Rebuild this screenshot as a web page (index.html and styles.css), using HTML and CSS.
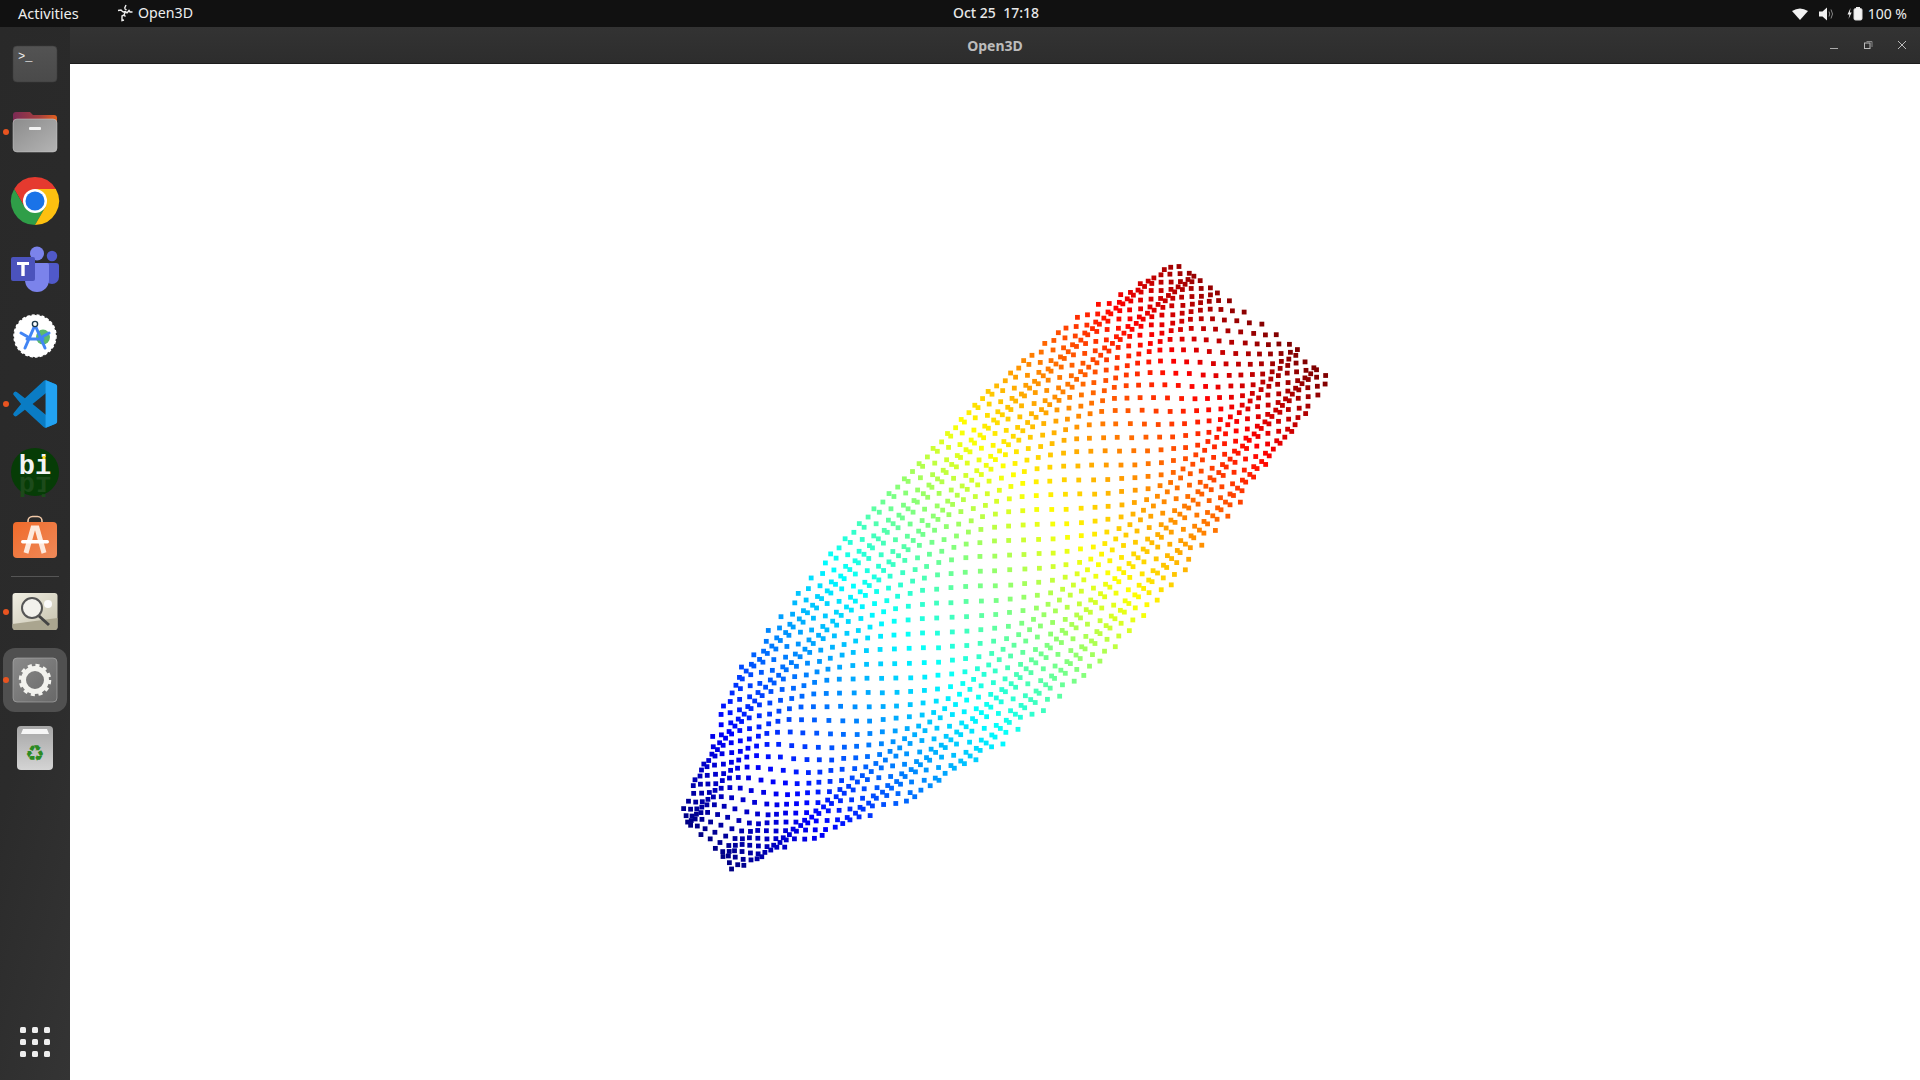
FILE: index.html
```html
<!DOCTYPE html>
<html lang="en">
<head>
<meta charset="utf-8">
<title>Open3D</title>
<link rel="stylesheet" href="styles.css">
</head>
<body>
<header class="topbar">
  <div class="top-left">
    <span class="activities">Activities</span>
    <span class="app-menu">
      <svg class="app-glyph" viewBox="0 0 16 18" width="16" height="18"><path d="M9 1 7.5 4.5 M7.5 4.5 9.5 6 M1 6.5 4 6 6 8 M6 8 8.5 7.5 10 9 M10 9 12 6.5 13 8 15.5 8 M8.5 7.5 7 11 8.5 12.5 M7 11 5 12 5 16.5 7 16" fill="none" stroke="#eee" stroke-width="1.4"/></svg>
      Open3D
    </span>
  </div>
  <time class="clock">Oct 25  17:18</time>
  <div class="top-right">
    <svg class="tray-wifi" viewBox="0 0 16 12" width="16" height="12"><path d="M0 3 Q8 -2 16 3 L8 12Z" fill="#f2f2f2"/></svg>
    <svg class="tray-vol" viewBox="0 0 16 14" width="16" height="14"><path d="M0 4.500H3.500L8 .5V13.500L3.500 9.500H0Z" fill="#f0f0f0"/><path d="M10 4.500Q11.500 7 10 9.500M12 2.500Q15 7 12 11.500" fill="none" stroke="#888" stroke-width="1"/></svg>
    <svg class="tray-bat" viewBox="0 0 16 14" width="16" height="14"><path d="M3.500 1 0.500 7.500H2.500L1.500 12 4.700 5.500H2.800Z" fill="#f0f0f0"/><rect x="7" y="1.500" width="8" height="11.500" rx="1.500" fill="#f4f4f4" stroke="#ddd"/><rect x="9" y="0" width="4" height="2" fill="#eee"/></svg>
    <span class="battery">100 %</span>
  </div>
</header>
<div class="desktop">
  <nav class="dock">
    <div class="dock-apps">
      <div class="dock-item">
        <svg class="ico" viewBox="0 0 48 48"><defs><linearGradient id="term" x1="0" y1="0" x2="0" y2="1"><stop offset="0" stop-color="#535353"/><stop offset="1" stop-color="#4a4a4a"/></linearGradient></defs><rect x="2" y="6" width="44" height="36" rx="4" fill="url(#term)" stroke="#3c3c3c" stroke-width=".6"/><text x="7" y="20" class="term-text">&gt;_</text></svg>
      </div>
      <div class="dock-item running">
        <svg class="ico" viewBox="0 0 48 48"><defs><linearGradient id="ftab" x1="0" y1="0" x2="1" y2="0"><stop offset="0" stop-color="#7b2a55"/><stop offset=".6" stop-color="#a5403e"/><stop offset="1" stop-color="#e2611f"/></linearGradient><linearGradient id="fbody" x1="0" y1="0" x2="1" y2="1"><stop offset="0" stop-color="#8c8c8c"/><stop offset="1" stop-color="#b4b4b4"/></linearGradient></defs><path d="M2 7a3 3 0 0 1 3-3H19l3 3H43a3 3 0 0 1 3 3V20H2Z" fill="url(#ftab)"/><rect x="2" y="11" width="44" height="33" rx="4" fill="url(#fbody)" stroke="#ccc" stroke-width=".5"/><rect x="18" y="19" width="12" height="3" rx="1" fill="#f2f2f2"/></svg>
      </div>
      <div class="dock-item">
        <svg class="ico" viewBox="0 -1 48 48"><path d="M44.800 12A24 24 0 0 0 3.200 12L13.600 30 24 24V12Z" fill="#e53a2f"/><path d="M3.200 12A24 24 0 0 0 24 48L34.400 30 24 24 13.600 30Z" fill="#2f9e48"/><path d="M24 48A24 24 0 0 0 44.800 12H24V24L34.400 30Z" fill="#fdc010"/><circle cx="24" cy="24" r="12" fill="#fff"/><circle cx="24" cy="24" r="9.500" fill="#1a73e8"/></svg>
      </div>
      <div class="dock-item">
        <svg class="ico" viewBox="0 -2 48 48"><circle cx="26" cy="7.500" r="7" fill="#7b83eb"/><circle cx="41" cy="10" r="5.200" fill="#5059c9"/><path d="M34 17H45a3 3 0 0 1 3 3V31a7 7 0 0 1-14 0Z" fill="#5059c9"/><path d="M14 17H36a2 2 0 0 1 2 2V34a12 12 0 0 1-24 0Z" fill="#7b83eb"/><rect x="0" y="11" width="24" height="24" rx="2" fill="#4b53bc"/><path d="M6 16H18V19H13.700V30H10.300V19H6Z" fill="#fff"/></svg>
      </div>
      <div class="dock-item">
        <svg class="ico" viewBox="0 0 48 48"><circle cx="24" cy="24" r="21" fill="#fff" stroke="#fff" stroke-width="1.500" stroke-dasharray="3 2"/><ellipse cx="32" cy="25" rx="7" ry="7.500" fill="#5cb96c"/><path d="M24 13 14 36M24 13 34 36M16 27H32" fill="none" stroke="#4285f4" stroke-width="3" stroke-linecap="round"/><path d="M10 21 17 25M38 21 31 25" stroke="#4285f4" stroke-width="3" stroke-linecap="round"/><circle cx="24" cy="12" r="2.600" fill="#fff" stroke="#1d3a4c" stroke-width="1.400"/></svg>
      </div>
      <div class="dock-item running">
        <svg class="ico" viewBox="0 0 100 100"><path d="M93 9 74 1a5 5 0 0 0-6 1L29 38 12 25a4 4 0 0 0-5 0L6 26a4 4 0 0 0 0 6L21 50 6 68a4 4 0 0 0 0 6l1 1a4 4 0 0 0 5 0L29 62 68 98a5 5 0 0 0 6 1L93 91a5 5 0 0 0 3-4V13a5 5 0 0 0-3-4ZM73 27 45 50 73 73Z" fill="#0a7cc4" fill-rule="evenodd"/><path d="M72 0.500a5 5 0 0 1 2 .5L93 9a5 5 0 0 1 3 4V87a5 5 0 0 1-3 4L74 99a5 5 0 0 1-2 .5V0.500Z" fill="#22a2f2"/></svg>
      </div>
      <div class="dock-item">
        <svg class="ico" viewBox="0 0 48 48"><circle cx="24" cy="24" r="24" fill="#063c06"/><text x="24" y="26" class="bi-shadow" transform="matrix(1 0 0 -1 0 55)">bi</text><text x="24" y="26" class="bi-text">bi</text><rect x="31.500" y="8" width="3" height="3" fill="#ffdf20"/></svg>
      </div>
      <div class="dock-item">
        <svg class="ico" viewBox="0 0 48 48"><defs><linearGradient id="store" x1="0" y1="0" x2="1" y2="1"><stop offset="0" stop-color="#f06a2a"/><stop offset="1" stop-color="#ee8a5a"/></linearGradient></defs><path d="M17 9V5a4.500 4.500 0 0 1 4.500-4.500H26.500A4.500 4.500 0 0 1 31 5V9" fill="none" stroke="#f2c9a8" stroke-width="1.600"/><rect x="2" y="6" width="44" height="36" rx="4" fill="url(#store)"/><path d="M15 37 22 12H26L33 37" fill="none" stroke="#fde9dd" stroke-width="5"/><rect x="10" y="24" width="28" height="3.500" rx="1.700" fill="#fff"/></svg>
      </div>
      <div class="dock-sep"></div>
      <div class="dock-item running">
        <svg class="ico" viewBox="0 0 48 48"><defs><linearGradient id="photo" x1="0" y1="0" x2="1" y2="1"><stop offset="0" stop-color="#f0eee2"/><stop offset="1" stop-color="#c6c2ae"/></linearGradient></defs><rect x="1.500" y="5" width="45" height="37" rx="3" fill="url(#photo)"/><path d="M1.500 36 46.500 30V39a3 3 0 0 1-3 3H4.500a3 3 0 0 1-3-3Z" fill="#aaa58f"/><circle cx="37" cy="16" r="4" fill="#fafafa"/><circle cx="21" cy="20" r="10" fill="#f2f1ec" stroke="#555" stroke-width="2"/><path d="M28 28 38 37" stroke="#444" stroke-width="3"/></svg>
      </div>
      <div class="dock-item running active">
        <svg class="ico" viewBox="0 0 48 48"><defs><linearGradient id="gearbg" x1="0" y1="0" x2="1" y2="1"><stop offset="0" stop-color="#8a8a8a"/><stop offset="1" stop-color="#686868"/></linearGradient></defs><rect x="2" y="2" width="44" height="44" rx="4" fill="url(#gearbg)" stroke="#b0b0b0" stroke-width=".6"/><circle cx="24" cy="24" r="11.500" fill="none" stroke="#f2f2ee" stroke-width="5"/><circle cx="24" cy="24" r="14.500" fill="none" stroke="#f2f2ee" stroke-width="3.500" stroke-dasharray="4 3.590"/></svg>
      </div>
      <div class="dock-item">
        <svg class="ico" viewBox="0 0 48 48"><defs><linearGradient id="bin" x1="0" y1="0" x2="0" y2="1"><stop offset="0" stop-color="#a6a6a6"/><stop offset="1" stop-color="#d4d4d4"/></linearGradient></defs><rect x="6" y="2" width="36" height="44" rx="4" fill="url(#bin)"/><path d="M10 10 12 5H36L38 10Z" fill="#f6f6f6"/><text x="24" y="37" class="recycle">♻</text></svg>
      </div>
    </div>
    <div class="app-grid">
      <i></i><i></i><i></i><i></i><i></i><i></i><i></i><i></i><i></i>
    </div>
  </nav>
  <main class="window">
    <div class="titlebar">
      <span class="title">Open3D</span>
      <div class="win-controls">
        <svg viewBox="0 0 10 10" width="10" height="10"><path d="M1 8.500H9" stroke="#aaa" stroke-width="1"/></svg>
        <svg viewBox="0 0 10 10" width="10" height="10"><rect x="1.500" y="3" width="5.500" height="5.500" fill="none" stroke="#bbb"/><path d="M3.500 1.500H9V7" fill="none" stroke="#888"/></svg>
        <svg viewBox="0 0 10 10" width="10" height="10"><path d="M1 1 9 9M9 1 1 9" stroke="#bbb" stroke-width="1"/></svg>
      </div>
    </div>
    <canvas id="cloud" class="cloud" width="1850" height="1016"></canvas>
  </main>
</div>
<script src="script.js"></script>
</body>
</html>
```
FILE: styles.css
```css
* { box-sizing: border-box; }
html, body { margin: 0; height: 100%; overflow: hidden; background: #fff; }
body {
  display: flex;
  flex-direction: column;
  height: 1080px;
  font-family: "Noto Sans", "Open Sans", sans-serif;
  font-size: 14.6px;
  line-height: 20px;
  color: #eee;
}
.topbar {
  flex: 0 0 27px;
  display: grid;
  grid-template-columns: 935px auto 1fr;
  align-items: center;
  background: #111;
  padding: 0 13px 0 18px;
}
.top-left { display: flex; align-items: center; gap: 35px; margin-top: -1px; }
.activities { width: 64px; }
.app-menu { display: flex; align-items: center; gap: 5px; font-size: 14.2px; }
.app-glyph { display: block; }
.clock { white-space: pre; font-weight: 500; font-size: 14px; color: #e8e8e8; margin-top: -1px; }
.top-right { display: flex; align-items: center; justify-content: flex-end; }
.tray-wifi { margin-right: 11px; }
.tray-vol { margin-right: 12px; }
.tray-bat { margin-right: 5px; }
.battery { font-size: 14px; }
.desktop { flex: 1; display: flex; min-height: 0; }
.dock {
  flex: 0 0 70px;
  display: flex;
  flex-direction: column;
  justify-content: space-between;
  background: linear-gradient(105deg, #292929 0%, #2b2b2b 60%, #343434 100%);
  padding: 3px 0 7px;
}
.dock-apps { display: flex; flex-direction: column; }
.dock-item {
  position: relative;
  height: 68px;
  display: flex;
  align-items: center;
  justify-content: center;
}
.ico { width: 48px; height: 48px; display: block; overflow: visible; }
.running::before {
  content: "";
  position: absolute;
  left: 3px;
  top: 31px;
  width: 6px;
  height: 6px;
  border-radius: 50%;
  background: #e95420;
  z-index: 1;
}
.active::after {
  content: "";
  position: absolute;
  left: 3px;
  top: 2px;
  width: 64px;
  height: 64px;
  border-radius: 12px;
  background: #505050;
}
.active .ico { position: relative; z-index: 1; }
.dock-sep { height: 1px; margin: 2px 11px 1px; background: #555; }
.app-grid {
  display: grid;
  grid-template-columns: repeat(3, 6px);
  grid-auto-rows: 6px;
  gap: 6px;
  justify-content: center;
  height: 62px;
  align-content: center;
}
.app-grid i { background: #eee; border-radius: 1.5px; }
.window { flex: 1; display: flex; flex-direction: column; min-width: 0; }
.titlebar {
  flex: 0 0 37px;
  position: relative;
  display: flex;
  align-items: center;
  justify-content: center;
  padding-top: 1px;
  background: linear-gradient(#333, #2d2d2d);
  border-bottom: 1px solid #1c1c1c;
}
.title { font-weight: 700; color: #bcbcbc; font-size: 14px; }
.win-controls {
  position: absolute;
  right: 13px;
  top: 13px;
  display: flex;
  gap: 24px;
}
.win-controls svg { display: block; }
.cloud { display: block; flex: 1; width: 1850px; height: 1016px; background: #fff; }
.term-text { font-family: "Liberation Mono", monospace; font-size: 12px; fill: #eee; }
.bi-text { font-family: "Liberation Mono", monospace; font-weight: 700; font-size: 27px; fill: #f4f4f4; text-anchor: middle; }
.bi-shadow { font-family: "Liberation Mono", monospace; font-weight: 700; font-size: 27px; fill: #1c4a1a; text-anchor: middle; }
.recycle { font-family: "DejaVu Sans", sans-serif; font-size: 22px; fill: #2b8a22; text-anchor: middle; }
```
FILE: script.js
```js
(function () {
  var cv = document.getElementById('cloud');
  var g = cv.getContext('2d');
  var OX = 70, OY = 64, R = Math.SQRT2;
  // outline of the cloud, in axis coordinates: [along, lower, upper]
  var lo = [[-120, 1070], [-85, 1054], [53, 993], [226, 976], [414, 972], [566, 988], [642, 1008], [700, 1025]];
  var hi = [[-120, 1118], [-94, 1134], [0, 1176], [69, 1206], [172, 1236], [318, 1246], [416, 1242], [502, 1236], [606, 1220], [668, 1208], [700, 1195]];
  function lerp(t, l) {
    if (l <= t[0][0]) return t[0][1];
    for (var k = 1; k < t.length; k++) {
      if (l <= t[k][0]) {
        var a = t[k - 1], b = t[k];
        return a[1] + (b[1] - a[1]) * (l - a[0]) / (b[0] - a[0]);
      }
    }
    return t[t.length - 1][1];
  }
  function c(v) { return Math.round(255 * Math.max(0, Math.min(1, v))); }
  function jet(t) {
    return 'rgb(' + c(1.5 - Math.abs(4 * t - 3)) + ',' + c(1.5 - Math.abs(4 * t - 2)) + ',' + c(1.5 - Math.abs(4 * t - 1)) + ')';
  }
  function noise(i, j, k) {
    var v = Math.sin(i * 12.9898 + j * 78.233 + k * 37.719) * 43758.5453;
    return (v - Math.floor(v)) * 2 - 1;
  }
  function tanh(x) {
    var p = Math.exp(x), q = Math.exp(-x);
    return (p - q) / (p + q);
  }
  var LC = 285, ATOP = 488, ABOT = 403;
  // the sheet: flat in the middle, turning away steeply towards both rims
  var SLOPE = 0.38, W = 0.46, UMAX = (1 - (1 - SLOPE) * W) / SLOPE;
  for (var i = -90; i <= 90; i++) {
    for (var j = -90; j <= 90; j++) {
      var px = 1010 + 15 * i + 0.6 * j;
      var py = 570 - 0.6 * i + 15 * j;
      var l0 = (px - py) / R, s0 = (px + py) / R;
      var lr = l0 - LC;
      var amp = lr > 0 ? ATOP : ABOT;
      if (lr > ATOP * 0.93 || lr < -ABOT * 1.25) continue;
      var l = LC + amp * Math.sin(lr / amp);
      var a = lerp(lo, l), b = lerp(hi, l);
      var mid = (a + b) / 2, half = (b - a) / 2;
      var sr = s0 - mid, u = sr / half;
      if (Math.abs(u) > UMAX) continue;
      var s = mid + half * (SLOPE * u + (1 - SLOPE) * W * tanh(u / W));
      // ripple that gathers the steep part into short chains
      var e = Math.abs(tanh(u / W));
      e = e * e * e * e;
      s += 2.6 * e * Math.sin(2 * Math.PI * s0 / 64);
      s = Math.max(a, Math.min(b, s));
      // the far end of the sheet is cut on a slant
      if (l > LC) {
        var p = (l - LC) / 383;
        l -= Math.max(0, 1 - (s - 1013) / 193) * 26 * p * p;
      }
      var x = (s + l) / R + noise(i, j, 1) * 0.4;
      var y = (s - l) / R + noise(i, j, 2) * 0.4;
      var t = Math.max(0, Math.min(1, (x - y + 140) / 1085));
      g.fillStyle = jet(t);
      g.fillRect(x - OX - 2.4, y - OY - 2.4, 4.8, 4.8);
    }
  }
})();
```
